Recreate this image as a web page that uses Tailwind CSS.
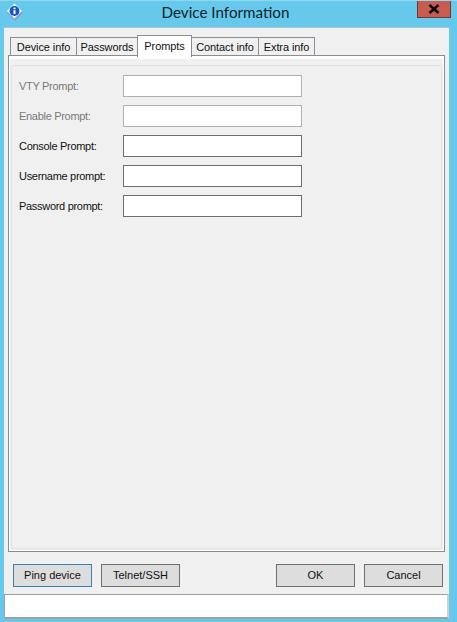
<!doctype html>
<html>
<head>
<meta charset="utf-8">
<script src="https://cdn.jsdelivr.net/npm/@tailwindcss/browser@4"></script>
</head>
<body class="m-0 overflow-hidden">
<div class="w-[457px] h-[622px] bg-[#66c9eb] border-t border-t-[#8fd6ef] flex flex-col font-['Liberation_Sans',sans-serif] text-[11px] tracking-[-0.3px] text-[#111]">
  <div class="h-[26px] flex items-start shrink-0">
    <div class="w-[28px] h-[26px] pl-[5px] pt-[1px] shrink-0">
      <svg width="19" height="19" viewBox="0 0 19 19"><path d="M10 2.5 18 10.5 10 18.5 2 10.5Z" fill="#8f97bd"/><path d="M9.5 1.5 17 9 9.5 16.5 2 9Z" fill="#fff"/><circle cx="9.5" cy="9" r="5" fill="#1558bd"/><rect x="8.5" y="8.2" width="2" height="3.8" fill="#fff"/><rect x="8.5" y="5.6" width="2" height="1.7" fill="#fff"/></svg>
    </div>
    <div class="flex-1 text-center font-['Lato',sans-serif] tracking-normal text-[15.2px] leading-[22px] pl-[6px] text-[#10222b]">Device Information</div>
    <div class="w-[34px] h-[17px] mr-[6px] bg-[#c75c50] border border-t-0 border-[#6f3a35] flex items-center justify-center shrink-0">
      <svg width="12" height="10" viewBox="0 0 12 10"><path d="M1.5 1 10.5 9M10.5 1 1.5 9" stroke="#0a0a0a" stroke-width="2.6"/></svg>
    </div>
  </div>
  <div class="mx-[4px] w-[445px] h-[592px] bg-[#f0f0f0] flex flex-col border-t border-t-[#a9c6d4] shrink-0">
    <div class="h-[27px] pl-[6px] flex items-end relative z-10 shrink-0 tracking-[-0.1px]">
      <div class="w-[67px] h-[19px] mb-[-1px] pt-[1px] border border-[#898c95] bg-[#f0f0f0] flex items-center justify-center">Device info</div>
      <div class="w-[62px] h-[19px] mb-[-1px] pt-[1px] ml-[-1px] border border-[#898c95] bg-[#f0f0f0] flex items-center justify-center">Passwords</div>
      <div class="w-[55px] h-[22px] mb-[-2px] ml-[-1px] border border-b-0 border-[#898c95] bg-white flex items-start pt-[2px] justify-center">Prompts</div>
      <div class="w-[68px] h-[19px] mb-[-1px] pt-[1px] ml-[-1px] border border-[#898c95] bg-[#f0f0f0] flex items-center justify-center">Contact info</div>
      <div class="w-[57px] h-[19px] mb-[-1px] pt-[1px] ml-[-1px] border border-[#898c95] bg-[#f0f0f0] flex items-center justify-center">Extra info</div>
    </div>
    <div class="mx-[4px] w-[437px] h-[497px] border border-[#898c95] bg-white pt-[3px] px-[1px] pb-[1px] shrink-0">
      <div class="h-full bg-[#f0f0f0] pt-[6px] px-[1px] pb-[1px]">
        <div class="h-full border border-[#dfe3e8] rounded-[2px] pt-[9px] pl-[7px] flex flex-col gap-[8px]">
          <div class="flex items-center h-[22px] text-[#7a7a7a]"><span class="w-[104px]">VTY Prompt:</span><div class="w-[179px] h-[22px] bg-white border border-[#adb2b5]"></div></div>
          <div class="flex items-center h-[22px] text-[#7a7a7a]"><span class="w-[104px]">Enable Prompt:</span><div class="w-[179px] h-[22px] bg-white border border-[#adb2b5]"></div></div>
          <div class="flex items-center h-[22px]"><span class="w-[104px]">Console Prompt:</span><div class="w-[179px] h-[22px] bg-white border border-[#6e6e6e]"></div></div>
          <div class="flex items-center h-[22px]"><span class="w-[104px]">Username prompt:</span><div class="w-[179px] h-[22px] bg-white border border-[#6e6e6e]"></div></div>
          <div class="flex items-center h-[22px]"><span class="w-[104px]">Password prompt:</span><div class="w-[179px] h-[22px] bg-white border border-[#6e6e6e]"></div></div>
        </div>
      </div>
    </div>
    <div class="h-[42px] pl-[9px] pr-[6px] pt-[12px] flex items-start shrink-0 tracking-normal">
      <div class="w-[79px] h-[23px] bg-[#dddddd] border border-[#3c7fb1] flex items-center justify-center">Ping device</div>
      <div class="w-[79px] h-[23px] ml-[9px] bg-[#dddddd] border border-[#707070] flex items-center justify-center">Telnet/SSH</div>
      <div class="w-[79px] h-[23px] ml-auto bg-[#dddddd] border border-[#707070] flex items-center justify-center">OK</div>
      <div class="w-[79px] h-[23px] ml-[9px] bg-[#dddddd] border border-[#707070] flex items-center justify-center">Cancel</div>
    </div>
    <div class="h-[25px] bg-white border-t border-l border-b-2 border-r-2 border-[#a0a0a0] border-r-[#d0d0d0] shrink-0"></div>
  </div>
</div>
</body>
</html>
